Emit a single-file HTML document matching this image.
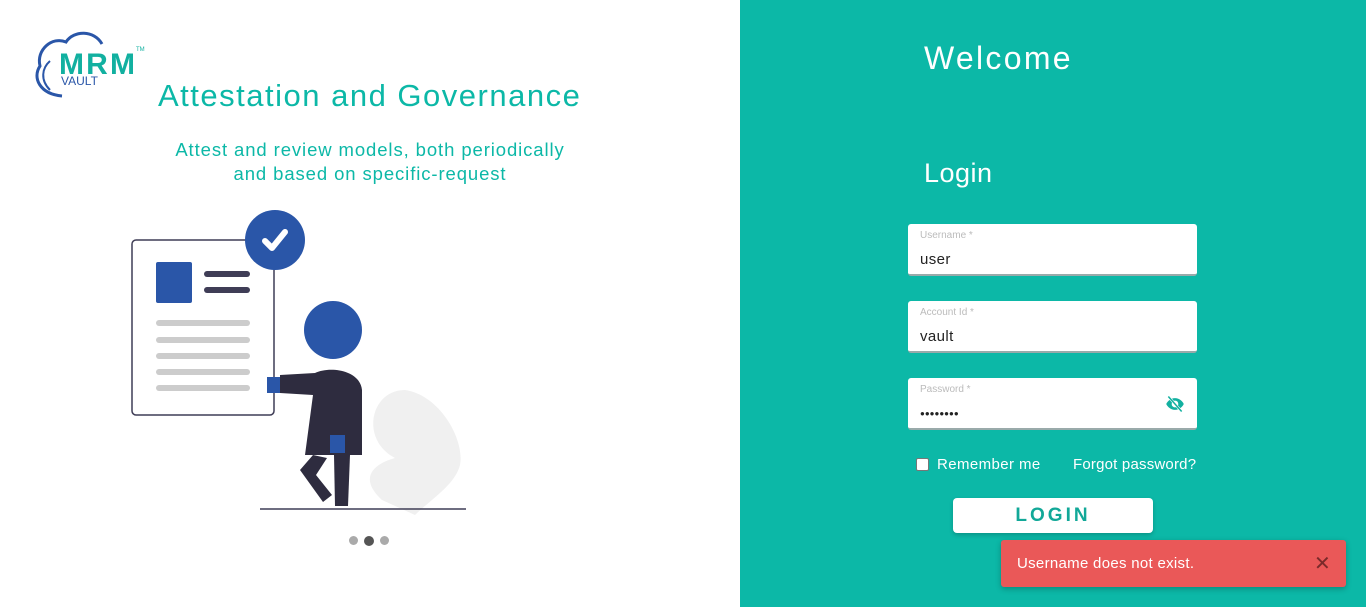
<!DOCTYPE html>
<html><head><meta charset="utf-8"><style>
*{box-sizing:border-box;margin:0;padding:0}
body{width:1366px;height:607px;overflow:hidden;font-family:"Liberation Sans",sans-serif;background:#fff;position:relative}
.left{position:absolute;left:0;top:0;width:740px;height:607px;background:#fff}
.right{position:absolute;left:740px;top:0;width:626px;height:607px;background:#0cb8a7}
.t{position:absolute;color:#0cb8a7}
.field{position:absolute;left:908px;width:289px;height:52px;background:#fff;border-radius:3px;border-bottom:2px solid #9aa;}
.field .l{position:absolute;left:12px;top:6px;font-size:10px;color:#bbb}
.field .v{position:absolute;left:12px;top:27px;font-size:15px;color:#222;letter-spacing:.4px}
</style></head><body>
<div class="left">
<svg style="position:absolute;left:30px;top:28px" width="120" height="72" viewBox="0 0 120 72">
<path d="M32 68 C10 66 2 50 10 38 C6 22 22 8 36 14 C44 2 64 2 72 16" fill="none" stroke="#2a56a8" stroke-width="3"/>
<path d="M20 62 C10 52 12 40 20 33" fill="none" stroke="#2a56a8" stroke-width="2"/>
<text x="29" y="46" font-family="Liberation Sans" font-weight="bold" font-size="30" fill="#12b0a0" textLength="76">MRM</text>
<text x="31" y="57" font-family="Liberation Sans" font-size="12" fill="#2a56a8">VAULT</text>
<text x="106" y="23" font-size="6" fill="#12b0a0">TM</text>
</svg>
<div class="t" style="left:158px;top:78px;font-size:31px;letter-spacing:1.5px">Attestation and Governance</div>
<div class="t" style="left:120px;top:138px;width:500px;text-align:center;font-size:18.5px;line-height:24px;letter-spacing:.9px">Attest and review models, both periodically<br>and based on specific-request</div>
<svg style="position:absolute;left:120px;top:200px" width="360" height="320" viewBox="0 0 360 320">
<path d="M262 300 C240 280 250 265 275 258 C240 240 250 190 285 190 C320 195 345 240 340 265 C335 285 310 300 295 315 Z" fill="#f0f0f0"/>
<rect x="12" y="40" width="142" height="175" rx="4" fill="#fff" stroke="#3f3d56" stroke-width="1.5"/>
<rect x="36" y="62" width="36" height="41" rx="2" fill="#2a56a8"/>
<rect x="84" y="71" width="46" height="6" rx="3" fill="#3f3d56"/>
<rect x="84" y="87" width="46" height="6" rx="3" fill="#3f3d56"/>
<g fill="#ccc"><rect x="36" y="120" width="94" height="6" rx="3"/><rect x="36" y="137" width="94" height="6" rx="3"/><rect x="36" y="153" width="94" height="6" rx="3"/><rect x="36" y="169" width="94" height="6" rx="3"/><rect x="36" y="185" width="94" height="6" rx="3"/></g>
<circle cx="155" cy="40" r="30" fill="#2a56a8"/>
<path d="M145 41 L152 48 L165 32" fill="none" stroke="#fff" stroke-width="6" stroke-linecap="round" stroke-linejoin="round"/>
<circle cx="213" cy="130" r="29" fill="#2a56a8"/>
<rect x="147" y="177" width="14" height="16" fill="#2a56a8"/>
<path d="M160 175 L195 173 C210 166 240 170 242 190 L242 255 L185 255 L193 195 L160 193 Z" fill="#2e2c3f"/>
<rect x="210" y="235" width="15" height="18" fill="#2a56a8"/>
<path d="M214 255 L230 255 L228 306 L215 306 Z" fill="#2e2c3f"/>
<path d="M193 255 L207 258 L196 275 L212 295 L203 302 L180 270 Z" fill="#2e2c3f"/>
<line x1="140" y1="309" x2="346" y2="309" stroke="#3f3d56" stroke-width="1.5"/>
</svg>
<div style="position:absolute;left:349px;top:536px;width:9px;height:9px;border-radius:50%;background:#aaa"></div>
<div style="position:absolute;left:364px;top:536px;width:10px;height:10px;border-radius:50%;background:#555"></div>
<div style="position:absolute;left:380px;top:536px;width:9px;height:9px;border-radius:50%;background:#aaa"></div>
</div>
<div class="right"></div>
<div style="position:absolute;left:924px;top:40px;font-size:32px;color:#fff;letter-spacing:2.3px">Welcome</div>
<div style="position:absolute;left:924px;top:158px;font-size:27px;color:#fff;letter-spacing:.5px">Login</div>
<div class="field" style="top:224px"><div class="l">Username *</div><div class="v">user</div></div>
<div class="field" style="top:301px"><div class="l">Account Id *</div><div class="v">vault</div></div>
<div class="field" style="top:378px"><div class="l">Password *</div><div class="v" style="font-size:8px;top:31px;letter-spacing:0">●●●●●●●●</div>
<svg style="position:absolute;left:256px;top:16px" width="22" height="20" viewBox="0 0 24 24"><path d="M12 5C7 5 3 8.5 1.5 12 3 15.5 7 19 12 19s9-3.5 10.5-7C21 8.5 17 5 12 5z" fill="#12b0a0"/><circle cx="12" cy="12" r="4" fill="#fff"/><line x1="4" y1="3" x2="20" y2="21" stroke="#fff" stroke-width="3"/><line x1="4" y1="3" x2="20" y2="21" stroke="#12b0a0" stroke-width="1.8"/></svg></div>
<div style="position:absolute;left:916px;top:458px;width:13px;height:13px;background:#fff;border:1px solid #777;border-radius:2px"></div>
<div style="position:absolute;left:937px;top:456px;font-size:15px;color:#fff;letter-spacing:.4px">Remember me</div>
<div style="position:absolute;left:1073px;top:456px;font-size:15px;color:#fff;letter-spacing:.2px">Forgot password?</div>
<div style="position:absolute;left:953px;top:498px;width:200px;height:35px;background:#fff;border-radius:4px;text-align:center;line-height:35px;color:#12a898;font-size:19px;font-weight:bold;letter-spacing:3px;box-shadow:0 2px 4px rgba(0,0,0,.2)">LOGIN</div>
<div style="position:absolute;left:1001px;top:540px;width:345px;height:47px;background:#ea5858;border-radius:3px;box-shadow:0 2px 6px rgba(0,0,0,.25)">
<div style="position:absolute;left:16px;top:15px;font-size:15px;color:#fff;letter-spacing:.3px">Username does not exist.</div>
<div style="position:absolute;left:313px;top:11px;font-size:20px;color:#7a2a2a">✕</div></div>
</body></html>
